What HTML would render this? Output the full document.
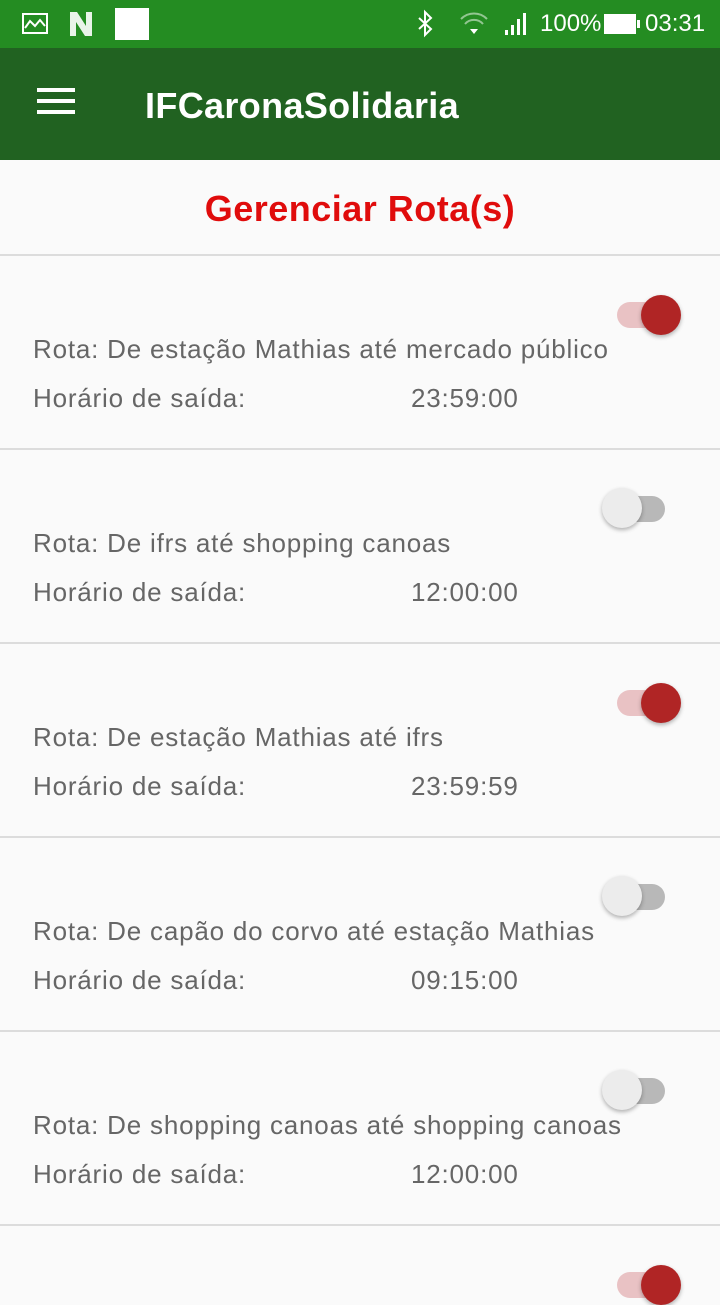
<!DOCTYPE html>
<html><head><meta charset="utf-8"><style>
body{margin:0;width:720px;height:1280px;overflow:hidden;background:#fafafa;font-family:"Liberation Sans",sans-serif;position:relative}
.sb{position:absolute;left:0;top:0;width:720px;height:48px;background:#248c22;color:#fff}
.ab{position:absolute;left:0;top:48px;width:720px;height:112px;background:#216221;color:#fff}
.t{position:absolute;left:0;width:720px;top:188px;text-align:center;color:#e00c0c;font-size:36px;font-weight:bold;letter-spacing:0.5px}
.hr{position:absolute;left:0;width:720px;height:2px;background:#dcdcdc}
.r{position:absolute;left:33px;color:#666;font-size:26px;letter-spacing:0.8px}
.tr{position:absolute;height:26px;border-radius:13px}
.th{position:absolute;width:40px;height:40px;border-radius:50%;box-shadow:0 2px 4px rgba(0,0,0,.3)}
</style></head><body>
<div class="sb">
<svg width="720" height="48" style="position:absolute;left:0;top:0">
<rect x="23" y="14" width="24" height="19" fill="none" stroke="#fff" stroke-width="2"/>
<path d="M25 28 L30 21 L35 26 L40 20 L45 26" fill="none" stroke="#fff" stroke-width="2"/>
<path d="M70 12h7l9 14V12h6v24h-7l-9-14v14h-6z" fill="#fff" opacity=".9"/>
<rect x="115" y="8" width="34" height="32" fill="#fff"/>
<path d="M419 18l12 11-6 6V12l6 6-12 11" fill="none" stroke="#fff" stroke-width="2"/>
<path d="M461 19a18 18 0 0 1 26 0M465 24a12 12 0 0 1 18 0" fill="none" stroke="#fff" stroke-width="2" opacity=".5"/>
<path d="M470 29l4 5 4-5z" fill="#fff"/>
<rect x="505" y="30" width="3" height="5" fill="#fff"/><rect x="511" y="25" width="3" height="10" fill="#fff"/><rect x="517" y="19" width="3" height="16" fill="#fff"/><rect x="523" y="13" width="3" height="22" fill="#fff"/>
<rect x="605" y="15" width="30" height="18" fill="#fff" stroke="#fff" stroke-width="2"/><rect x="637" y="20" width="3" height="8" fill="#fff"/>
</svg>
<span style="position:absolute;left:540px;top:10px;font-size:24px">100%</span>
<span style="position:absolute;left:645px;top:10px;font-size:24px">03:31</span>
</div>
<div class="ab">
<div style="position:absolute;left:37px;top:40px;width:38px;height:4px;background:#fff;box-shadow:0 11px 0 #fff,0 22px 0 #fff"></div>
<span style="position:absolute;left:145px;top:37px;font-size:36px;font-weight:bold;letter-spacing:0.35px">IFCaronaSolidaria</span>
</div>
<div class="t">Gerenciar Rota(s)</div>
<div class="hr" style="top:254px"></div>

<div class="tr" style="left:617px;top:302px;width:48px;background:#e9c2c4"></div><div class="th" style="left:641px;top:295px;background:#b02525"></div>
<div class="r" style="top:334px">Rota: De estação Mathias até mercado público</div>
<div class="r" style="top:383px">Horário de saída:</div><div class="r" style="left:411px;top:383px">23:59:00</div>
<div class="hr" style="top:448px"></div>

<div class="tr" style="left:612px;top:496px;width:53px;background:#b8b8b8"></div><div class="th" style="left:602px;top:488px;background:#ececec"></div>
<div class="r" style="top:528px">Rota: De ifrs até shopping canoas</div>
<div class="r" style="top:577px">Horário de saída:</div><div class="r" style="left:411px;top:577px">12:00:00</div>
<div class="hr" style="top:642px"></div>

<div class="tr" style="left:617px;top:690px;width:48px;background:#e9c2c4"></div><div class="th" style="left:641px;top:683px;background:#b02525"></div>
<div class="r" style="top:722px">Rota: De estação Mathias até ifrs</div>
<div class="r" style="top:771px">Horário de saída:</div><div class="r" style="left:411px;top:771px">23:59:59</div>
<div class="hr" style="top:836px"></div>

<div class="tr" style="left:612px;top:884px;width:53px;background:#b8b8b8"></div><div class="th" style="left:602px;top:876px;background:#ececec"></div>
<div class="r" style="top:916px">Rota: De capão do corvo até estação Mathias</div>
<div class="r" style="top:965px">Horário de saída:</div><div class="r" style="left:411px;top:965px">09:15:00</div>
<div class="hr" style="top:1030px"></div>

<div class="tr" style="left:612px;top:1078px;width:53px;background:#b8b8b8"></div><div class="th" style="left:602px;top:1070px;background:#ececec"></div>
<div class="r" style="top:1110px">Rota: De shopping canoas até shopping canoas</div>
<div class="r" style="top:1159px">Horário de saída:</div><div class="r" style="left:411px;top:1159px">12:00:00</div>
<div class="hr" style="top:1224px"></div>

<div class="tr" style="left:617px;top:1272px;width:48px;background:#e9c2c4"></div><div class="th" style="left:641px;top:1265px;background:#b02525"></div>
</body></html>
